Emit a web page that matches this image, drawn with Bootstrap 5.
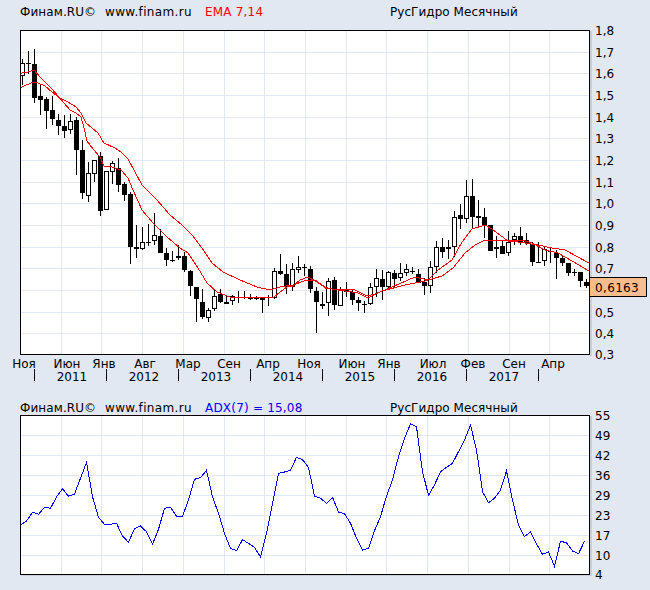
<!doctype html>
<html lang="ru">
<head>
<meta charset="utf-8">
<title>РусГидро Месячный</title>
<link href="https://cdn.jsdelivr.net/npm/bootstrap@5.3.0/dist/css/bootstrap.min.css" rel="stylesheet">
<style>
html,body{background:#e1e8f2;margin:0;overflow:hidden}
body{width:650px;height:590px;font-family:"DejaVu Sans","Liberation Sans",sans-serif;font-size:12px;color:#000}
.pane-head{padding-left:20px;line-height:15px;white-space:nowrap}
.pane-top{height:30px;padding-top:5px}
.pane-low{height:25px;padding-top:11px}
.hd-a{width:85px;letter-spacing:.1px}.hd-b{width:100px;letter-spacing:.35px}.hd-c{width:185px;letter-spacing:.2px}.hd-d{letter-spacing:.05px}
.tone-red{color:#f00}.tone-blue{color:#00f}
svg text{font-family:"DejaVu Sans","Liberation Sans",sans-serif;font-size:12px;fill:#000}
.plot-bg{fill:#fff}
.grid-ln{stroke:#e1e8f2;stroke-width:1;shape-rendering:crispEdges}
.shade{fill:#c9d0da}
.frame{fill:none;stroke:#000;stroke-width:1;shape-rendering:crispEdges}
.ema{fill:none;stroke:#f00;stroke-width:1;shape-rendering:crispEdges}
.adx{fill:none;stroke:#00f;stroke-width:1;shape-rendering:crispEdges}
.tick{stroke:#000;stroke-width:1;shape-rendering:crispEdges}
.tag{fill:#f9bd8d;stroke:#000;stroke-width:1;shape-rendering:crispEdges}
.tag-txt{letter-spacing:.35px}
.xmid{text-anchor:middle}
</style>
</head>
<body>
<main class="d-flex flex-column">
  <section>
    <div class="pane-head pane-top d-flex">
      <span class="hd-a">Финам.RU©</span><span class="hd-b">www.finam.ru</span><span class="hd-c tone-red">EMA 7,14</span><span class="hd-d">РусГидро Месячный</span>
    </div>
    <svg id="priceChart" class="d-block overflow-visible" width="650" height="360" viewBox="0 30 650 360" xmlns="http://www.w3.org/2000/svg">
      <rect class="plot-bg" x="20" y="30" width="570" height="325"/>
      <rect class="shade" x="590" y="31" width="2" height="325"/>
      <g id="priceGrid"></g>
      <g id="candles"></g>
      <polyline id="emaFast" class="ema"/>
      <polyline id="emaSlow" class="ema"/>
      <rect class="frame" x="20.5" y="30.5" width="569" height="324"/>
      <g>
        <text x="595" y="35">1,8</text><text x="595" y="57">1,7</text><text x="595" y="78">1,6</text><text x="595" y="100">1,5</text>
        <text x="595" y="122">1,4</text><text x="595" y="143">1,3</text><text x="595" y="165">1,2</text><text x="595" y="187">1,1</text>
        <text x="595" y="208">1,0</text><text x="595" y="230">0,9</text><text x="595" y="252">0,8</text><text x="595" y="273">0,7</text>
        <text x="595" y="317">0,5</text><text x="595" y="338">0,4</text><text x="595" y="359">0,3</text>
      </g>
      <rect class="tag" x="589.5" y="277.5" width="57" height="19"/>
      <text class="tag-txt" x="595" y="292">0,6163</text>
      <g class="xmid">
        <text class="xmid" x="24" y="368">Ноя</text><text class="xmid" x="67" y="368">Июн</text><text class="xmid" x="104" y="368">Янв</text>
        <text class="xmid" x="145" y="368">Авг</text><text class="xmid" x="188" y="368">Мар</text><text class="xmid" x="229" y="368">Сен</text>
        <text class="xmid" x="268" y="368">Апр</text><text class="xmid" x="309" y="368">Ноя</text><text class="xmid" x="352" y="368">Июн</text>
        <text class="xmid" x="389" y="368">Янв</text><text class="xmid" x="433" y="368">Июл</text><text class="xmid" x="473" y="368">Фев</text>
        <text class="xmid" x="514" y="368">Сен</text><text class="xmid" x="553" y="368">Апр</text>
        <text class="xmid" x="72" y="381">2011</text><text class="xmid" x="144" y="381">2012</text><text class="xmid" x="216" y="381">2013</text>
        <text class="xmid" x="288" y="381">2014</text><text class="xmid" x="360" y="381">2015</text><text class="xmid" x="432" y="381">2016</text>
        <text class="xmid" x="504" y="381">2017</text>
      </g>
      <g id="yearTicks"></g>
    </svg>
  </section>
  <section>
    <div class="pane-head pane-low d-flex">
      <span class="hd-a">Финам.RU©</span><span class="hd-b">www.finam.ru</span><span class="hd-c tone-blue">ADX(7) = 15,08</span><span class="hd-d">РусГидро Месячный</span>
    </div>
    <svg id="adxChart" class="d-block overflow-visible" width="650" height="175" viewBox="0 415 650 175" xmlns="http://www.w3.org/2000/svg">
      <rect class="shade" x="590" y="416" width="2" height="160"/>
      <rect class="shade" x="21" y="575" width="571" height="1"/>
      <rect class="plot-bg" x="20" y="415" width="570" height="160"/>
      <g id="adxGrid"></g>
      <polyline id="adxLine" class="adx"/>
      <rect class="frame" x="20.5" y="415.5" width="569" height="159"/>
      <text x="595" y="420">55</text><text x="595" y="440">49</text><text x="595" y="460">42</text><text x="595" y="480">36</text>
      <text x="595" y="500">29</text><text x="595" y="520">23</text><text x="595" y="540">17</text><text x="595" y="560">10</text><text x="595" y="579">4</text>
    </svg>
  </section>
</main>
<script src="https://cdn.jsdelivr.net/npm/bootstrap@5.3.0/dist/js/bootstrap.bundle.min.js"></script>
<script>
const NS='http://www.w3.org/2000/svg';
function el(parent,name,attrs){const n=document.createElementNS(NS,name);for(const k in attrs)n.setAttribute(k,attrs[k]);parent.appendChild(n);return n}
const vx=[61,101,142,183,224,264,305,346,386,427,468,509,549];
function grid(id,ys,t,b){const g=document.getElementById(id);
  vx.forEach(x=>el(g,'line',{class:'grid-ln',x1:x+.5,x2:x+.5,y1:t,y2:b}));
  ys.forEach(y=>el(g,'line',{class:'grid-ln',x1:20,x2:590,y1:y+.5,y2:y+.5}));}
grid('priceGrid',[52,73,95,117,138,160,182,203,225,247,268,290,312,333],30,355);
grid('adxGrid',[435,455,475,495,515,535,555],415,575);
// [high, low, bodyTop, bodyBottom, hollow]
const c=[[59,85,63,76,1],[51,74,63,64,0],[49,103,64,98,0],[85,115,96,100,0],[97,129,99,111,0],[96,125,110,119,0],[114,135,120,126,0],[115,138,126,131,0],[114,134,121,130,1],[117,175,120,150,0],
[140,199,150,193,0],[162,202,173,196,1],[160,182,160,174,1],[152,216,156,211,0],[171,210,171,210,1],[161,184,163,172,1],[158,192,168,185,0],[182,201,184,195,0],[192,264,194,247,0],[225,258,247,249,0],
[227,250,242,249,1],[224,246,242,243,0],[213,245,235,241,1],[229,253,236,253,0],[248,266,253,260,0],[251,262,260,261,0],[245,260,256,258,0],[252,272,256,270,0],[270,296,271,286,0],[287,322,287,299,0],
[289,319,302,317,0],[308,322,310,318,1],[290,311,296,309,1],[289,303,294,302,0],[295,304,302,304,0],[295,305,296,301,1],[291,303,297,298,0],[291,299,297,298,0],[294,300,297,299,0],[296,300,298,299,0],
[298,313,297,300,0],[295,306,297,298,0],[268,299,271,298,1],[254,275,271,274,0],[264,294,274,287,0],[263,291,269,287,1],[256,273,267,270,1],[264,276,267,268,0],[266,293,269,289,0],[287,333,291,302,0],
[292,309,304,306,0],[278,316,281,303,1],[277,310,280,305,0],[287,306,290,306,1],[282,297,290,292,0],[289,305,292,300,0],[297,311,300,303,0],[301,313,304,305,0],[283,305,287,304,1],[269,297,278,287,1],
[270,300,279,287,0],[271,290,272,287,1],[270,288,273,279,0],[263,281,273,278,1],[264,276,269,273,1],[267,274,271,272,0],[269,283,274,283,0],[278,295,282,286,0],[261,293,267,286,1],[241,273,247,267,1],
[238,258,247,252,0],[240,259,247,249,1],[211,257,217,247,1],[204,229,215,219,0],[180,223,196,219,1],[179,229,196,217,0],[200,227,216,218,0],[208,238,217,225,0],[225,251,225,251,0],[236,258,247,249,0],
[240,254,246,254,0],[231,256,242,253,1],[233,245,236,240,1],[227,245,236,242,0],[233,245,240,243,0],[242,266,244,262,0],[242,263,262,263,0],[247,266,249,261,1],[247,263,251,252,0],[250,279,253,258,0],
[255,266,258,263,0],[263,276,263,273,0],[269,276,272,273,0],[272,287,272,281,0],[279,288,282,286,0]];
const gc=document.getElementById('candles');
c.forEach((d,i)=>{const x=22+6*i;
  el(gc,'rect',{x:x,y:d[0],width:1,height:d[1]-d[0],fill:'#000','shape-rendering':'crispEdges'});
  if(d[4]) el(gc,'rect',{x:x-1.5,y:d[2]+.5,width:4,height:d[3]-d[2]-1,fill:'#fff',stroke:'#000','shape-rendering':'crispEdges'});
  else el(gc,'rect',{x:x-2,y:d[2],width:5,height:d[3]-d[2],fill:'#000','shape-rendering':'crispEdges'});
});
const fast=[[20,75],[22,73],[28,72],[34,70],[40,77],[46,83],[52,89],[58,96],[64,103],[70,110],[76,113],[81,117],[84,128],[87,141],[93,149],[100,157],[104,166],[112,167],[121,170],[128,178],[133,190],[142,210],[153,223],[167,237],[180,248],[188,253],[198,268],[207,283],[217,292],[230,297],[250,297],[273,298],[280,292],[287,287],[293,286],[300,280],[308,277],[317,282],[325,287],[335,290],[345,289],[353,289],[367,296],[375,294],[392,287],[415,277],[428,280],[438,270],[452,260],[462,242],[472,229],[485,225],[492,229],[508,241],[522,240],[532,243],[545,250],[558,253],[572,261],[589,271]];
const slow=[[20,88],[26,85],[34,82],[38,83],[45,86],[52,92],[60,98],[68,102],[76,107],[81,113],[86,123],[98,133],[104,143],[115,148],[121,152],[128,159],[135,172],[142,185],[147,190],[157,200],[170,215],[182,225],[192,235],[202,248],[212,263],[223,272],[240,280],[257,287],[270,290],[280,287],[293,285],[307,280],[317,281],[325,288],[345,291],[358,293],[368,298],[382,291],[405,285],[425,281],[442,276],[453,268],[465,253],[475,245],[485,240],[498,240],[518,242],[538,245],[552,248],[565,250],[589,263]];
const pts=a=>a.map(p=>p.join(',')).join(' ');
document.getElementById('emaFast').setAttribute('points',pts(fast));
document.getElementById('emaSlow').setAttribute('points',pts(slow));
const gt=document.getElementById('yearTicks');
[34,106,178,250,322,394,466,538].forEach(x=>el(gt,'line',{class:'tick',x1:x+.5,x2:x+.5,y1:369,y2:381}));
const z1=[405,393,367,373,352,355,321,296,319,312,265,217,320,382,403,403,400,438,457,416,408,425,463,418,355,352,379,379,330,268,263,241,320,370,430,475,482,449,460,472,501,430,340,250,246,241,202,209,232,318,325];
const z2=[340,322,366,371,400,445,481,475,422,380,318,270,200,145,102,110,245,316,285,245,232,220,185,150,105,180,305,338,325,300,243,330,405,440,425,462,493,486,529,454,458,483,491,454];
const adx=[...z1,...z2].map((v,i)=>[20.5+6*i,+(390+v/3).toFixed(1)]);
document.getElementById('adxLine').setAttribute('points',pts(adx));
</script>
</body>
</html>
